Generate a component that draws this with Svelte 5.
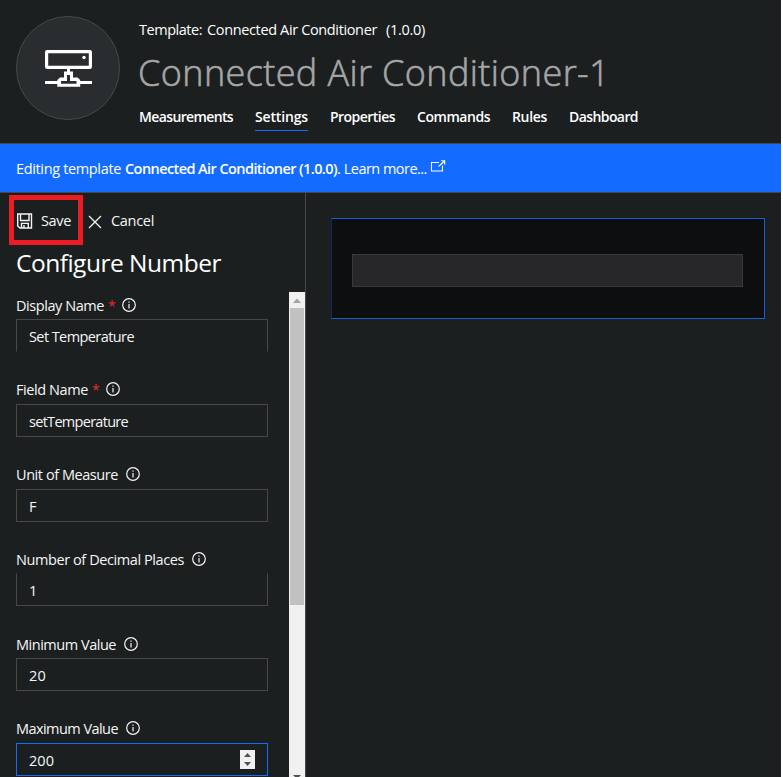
<script>
  const tabs = [
    { name: 'Measurements', width: 94 },
    { name: 'Settings', width: 53, active: true },
    { name: 'Properties', width: 65 },
    { name: 'Commands', width: 73 },
    { name: 'Rules', width: 35 },
    { name: 'Dashboard', width: 69 }
  ];

  const fields = [
    { label: 'Display Name', width: 88, required: true, value: 'Set Temperature', valueWidth: 105, height: 85, open: 'bottom' },
    { label: 'Field Name', width: 72, required: true, value: 'setTemperature', valueWidth: 99, height: 85, raised: true },
    { label: 'Unit of Measure', width: 102, value: 'F', valueWidth: 8, height: 84, raised: true },
    { label: 'Number of Decimal Places', width: 168, value: '1', valueWidth: 8, height: 85, open: 'top' },
    { label: 'Minimum Value', width: 100, value: '20', valueWidth: 17, height: 85 },
    { label: 'Maximum Value', width: 102, value: '200', valueWidth: 25, height: 85, focused: true, raised: true }
  ];

  // Spreads the tracking of a label so that it fills the given width.
  function fit(node, width) {
    const natural = node.getBoundingClientRect().width;
    node.style.letterSpacing = `${(width - natural) / node.textContent.length}px`;
  }
</script>

<div class="page">
  <header>
    <div class="avatar">
      <svg width="50" height="40" viewBox="0 0 50 40" fill="#fff">
        <rect x="3.600" y="3.600" width="43.800" height="15.800" rx="0.6" fill="none" stroke="#fff" stroke-width="3.200" />
        <circle cx="41" cy="9.500" r="1.700" />
        <path d="M24 20h3v4h-3zM2 33h13.500v3H2zM36 33h13v3H36z" />
        <path fill-rule="evenodd" d="M21 23.500h9v6h4.500l2.700 2.500v6.700H14.300V32l2.700-2.500h4zM24 27v6h-6v2.700h15.500V33H27v-6z" />
      </svg>
    </div>
    <div class="heading">
      <div class="template">
        <span class="t" use:fit={63}>Template:</span>
        <span class="t name" use:fit={170}>Connected Air Conditioner</span>
        <span class="t version" use:fit={39}>(1.0.0)</span>
      </div>
      <h1><span class="t" use:fit={472}>Connected Air Conditioner-1</span></h1>
      <nav>
        {#each tabs as tab}
          <div class="tab" class:active={tab.active}><span class="t" use:fit={tab.width}>{tab.name}</span></div>
        {/each}
      </nav>
    </div>
  </header>

  <div class="banner">
    <span class="t" use:fit={105}>Editing template</span>
    <b class="t" use:fit={212}>Connected Air Conditioner (1.0.0)</b><span class="t dot">.</span>
    <span class="t" use:fit={83}>Learn more...</span>
    <svg width="16" height="13" viewBox="0 0 16 13" fill="none" stroke="#fff" stroke-width="1.100">
      <path d="M9 2.500H1.500v8.500h11V5.500M8.500 6.500l6-5.500M11 .8h3.700v3.700" />
    </svg>
  </div>

  <main>
    <section class="side">
      <div class="toolbar">
        <div class="save">
          <svg width="16" height="16" viewBox="0 0 16 16" fill="none" stroke="#f4f4f4" stroke-width="1.400">
            <path d="M.7 1h13.800v14H3L.7 13zM3.500 1v6.500h8.500V1M4.500 15v-4.600h6.800V15M7 12v3" />
          </svg>
          <span class="t" use:fit={30}>Save</span>
        </div>
        <div class="cancel">
          <svg width="14" height="14" viewBox="0 0 14 14" fill="none" stroke="#f4f4f4" stroke-width="1.300">
            <path d="M1 1l12 12M13 1L1 13" />
          </svg>
          <span class="t" use:fit={43}>Cancel</span>
        </div>
      </div>
      <h2><span class="t" use:fit={205}>Configure Number</span></h2>
      <div class="scroller">
        <form>
          {#each fields as field}
            <div class="field" style:height="{field.height}px">
              <div class="label" class:raised={field.raised}>
                <span class="t" use:fit={field.width}>{field.label}</span>
                {#if field.required}<span class="star">*</span>{/if}
                <svg width="14" height="14" viewBox="0 0 14 14" fill="none" stroke="#f4f4f4" stroke-width="1.200">
                  <circle cx="7" cy="7" r="6.300" />
                  <path d="M7 6v4.500M7 3.500v1.300" />
                </svg>
              </div>
              <div class="input {field.open ? `open-${field.open}` : ''}" class:focused={field.focused}>
                <span class="t" use:fit={field.valueWidth}>{field.value}</span>
                {#if field.focused}
                  <svg class="spin" width="15" height="19" viewBox="0 0 15 19">
                    <rect width="15" height="19" fill="#f0f0f0" />
                    <path d="M4 7l3.500-4L11 7zM4 12h7l-3.500 4z" fill="#505050" />
                  </svg>
                {/if}
              </div>
            </div>
          {/each}
        </form>
        <div class="scrollbar">
          <svg width="16" height="16" viewBox="0 0 16 16"><path d="M4 11l4-4.500L12 11z" fill="#a3a3a3" /></svg>
          <div class="thumb"></div>
          <svg class="down" width="16" height="2" viewBox="0 0 16 2"><path d="M4 0h8l-2 2H6z" fill="#505050" /></svg>
        </div>
      </div>
    </section>
    <section class="preview">
      <div class="card"><div class="slot"></div></div>
    </section>
  </main>
</div>

<style>
  :global(body) { margin: 0; background: #fff; }
  .page {
    width: 781px;
    height: 777px;
    overflow: hidden;
    box-sizing: border-box;
    display: flex;
    flex-direction: column;
    background: #1b1f20;
    color: #fff;
    font: 14.5px/20px 'Open Sans', 'Noto Sans', sans-serif;
  }
  .t { display: inline-block; white-space: nowrap; flex: none; }
  svg { display: block; flex: none; }
  header {
    height: 143px;
    flex: none;
    display: flex;
    padding-left: 16px;
    border-bottom: 1px solid #484848;
  }
  .avatar {
    width: 104px;
    height: 104px;
    margin-top: 16px;
    box-sizing: border-box;
    border: 1px solid #484848;
    border-radius: 50%;
    background: #2a2d30;
    display: flex;
    justify-content: center;
    padding-top: 31px;
  }
  .heading { padding: 20px 0 0 19px; }
  .template { display: flex; }
  .name { margin-left: 5px; }
  .version { margin-left: 9px; }
  h1 {
    margin: 9px 0 7px -1px;
    font-size: 36px;
    line-height: 48px;
    font-weight: 300;
    color: #a6a6a6;
    -webkit-text-stroke: 0.6px #a6a6a6;
  }
  nav { display: flex; gap: 22px; font-weight: 600; font-size: 14px; line-height: 26px; }
  .tab { height: 26px; border-bottom: 1px solid transparent; }
  .active { border-color: #136bfb; }
  .banner {
    height: 48px;
    flex: none;
    display: flex;
    align-items: center;
    padding-left: 16px;
    background: #136bff;
    border-bottom: 1px solid #484848;
  }
  .banner .t { padding-top: 2px; }
  .banner b { margin-left: 4px; font-weight: 600; }
  .dot { margin-right: 3px; }
  .banner svg { margin: -3px 0 0 3px; }
  main { flex: 1; display: flex; min-height: 0; }
  .side {
    width: 305px;
    flex: none;
    display: flex;
    flex-direction: column;
    border-right: 1px solid #484848;
    color: #f6f6f6;
  }
  .toolbar { display: flex; height: 57px; align-items: center; padding-left: 9px; flex: none; }
  .toolbar .t { padding-top: 2px; }
  .save {
    width: 74px;
    height: 50px;
    margin-top: -3px;
    box-sizing: border-box;
    border: 5px solid #ed1c24;
    display: flex;
    align-items: center;
    padding-left: 3px;
    gap: 8px;
  }
  .save svg { margin-top: 2px; }
  .cancel { display: flex; align-items: center; gap: 9px; margin: -3px 0 0 5px; }
  .cancel svg { margin-top: 3px; }
  h2 { margin: 0; padding-left: 16px; height: 42px; flex: none; font-size: 24.500px; line-height: 26px; font-weight: 400; color: #fff; }
  .scroller { flex: 1; min-height: 0; display: flex; justify-content: space-between; overflow: hidden; }
  form { padding: 3px 0 0 16px; width: 252px; }
  .field { box-sizing: border-box; display: flow-root; }
  .label { display: flex; height: 24px; line-height: 21px; }
  .raised { margin-top: -1px; height: 25px; }
  .label svg { margin: 3px 0 0 8px; }
  .star { color: #e8282b; margin-left: 4px; width: 6px; font-size: 14px; }
  .input {
    height: 33px;
    box-sizing: border-box;
    border: 1px solid #484848;
    padding: 1px 12px 0;
    display: flex;
    align-items: center;
    justify-content: space-between;
  }
  .input .t { padding-top: 1px; }
  .open-bottom { border-bottom-color: transparent; }
  .open-top { border-top-color: transparent; }
  .focused { border-color: #136bff; }
  .spin { margin-top: -1px; }
  .scrollbar { width: 16px; background: #f0f0f0; display: flex; flex-direction: column; }
  .thumb { height: 297px; margin: 0 1px; background: #c1c1c1; flex: none; }
  .down { margin-top: auto; }
  .preview { flex: 1; padding: 25px 16px 0 25px; }
  .card {
    height: 101px;
    box-sizing: border-box;
    border: 1px solid #155fdb;
    border-left-color: #102b5c;
    background: #0d0e10;
    padding: 35px 21px 0 20px;
  }
  .slot { height: 33px; box-sizing: border-box; border: 1px solid #3a3a3b; background: #272729; }
</style>
